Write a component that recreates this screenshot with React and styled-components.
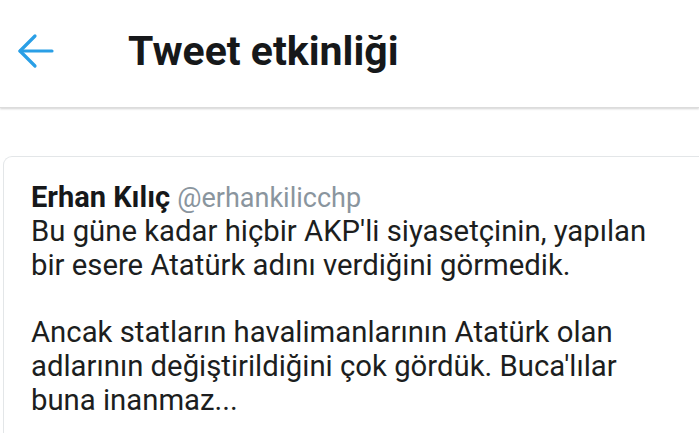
import React from "react";
import styled, { createGlobalStyle } from "styled-components";

const Global = createGlobalStyle`
  html, body { margin: 0; padding: 0; background: #ffffff; }
  body { font-family: Roboto, "Noto Sans", sans-serif; overflow: hidden; }
`;

const Page = styled.div`
  width: 699px;
  height: 433px;
  background: #ffffff;
  display: flex;
  flex-direction: column;
  overflow: hidden;
`;

const Header = styled.header`
  height: 108px;
  box-sizing: border-box;
  padding-bottom: 5px;
  flex: none;
  display: flex;
  align-items: center;
  background: #ffffff;
  box-shadow: 0 1px 2px rgba(0,0,0,0.18);
  border-bottom: 1px solid #dcdcdc;
  position: relative;
  z-index: 1;
`;

const BackButton = styled.button`
  border: 0;
  background: none;
  padding: 0;
  margin-left: 17px;
  width: 37px;
  height: 36px;
  display: flex;
  align-items: center;
  justify-content: center;
  color: #2a9fe6;
`;

const Title = styled.h1`
  margin: 0 0 0 74px;
  font-family: Roboto, sans-serif;
  font-weight: 700;
  font-size: 41px;
  line-height: 48px;
  color: #16181a;
  letter-spacing: 0;
`;

const Body = styled.main`
  flex: 1;
  padding: 48px 0 0 3px;
`;

const Card = styled.article`
  border: 1px solid #e3e6e8;
  border-right: none;
  border-radius: 9px 0 0 9px;
  padding: 23px 0 0 27px;
  height: 300px;
`;

const NameRow = styled.div`
  display: flex;
  align-items: baseline;
  gap: 7px;
  line-height: 34px;
`;

const Name = styled.span`
  font-size: 29px;
  font-weight: 700;
  color: #16181a;
`;

const Handle = styled.span`
  font-size: 27px;
  color: #8a959e;
`;

const Text = styled.p`
  margin: 0;
  font-size: 29.3px;
  line-height: 33.7px;
  color: #1c1e20;
  white-space: pre-line;
`;

export default function App() {
  return (
    <Page>
      <Global />
      <Header>
        <BackButton aria-label="Geri">
          <svg width="37" height="36" viewBox="0 0 37 36" fill="none" stroke="currentColor" strokeWidth="3.2" strokeLinecap="round" strokeLinejoin="round">
            <path d="M35 18H3" />
            <path d="M18 3L3 18l15 15" />
          </svg>
        </BackButton>
        <Title>Tweet etkinliği</Title>
      </Header>
      <Body>
        <Card>
          <NameRow>
            <Name>Erhan Kılıç</Name>
            <Handle>@erhankilicchp</Handle>
          </NameRow>
          <Text>{"Bu güne kadar hiçbir AKP'li siyasetçinin, yapılan\nbir esere Atatürk adını verdiğini görmedik.\n\nAncak statların havalimanlarının Atatürk olan\nadlarının değiştirildiğini çok gördük. Buca'lılar\nbuna inanmaz..."}</Text>
        </Card>
      </Body>
    </Page>
  );
}
